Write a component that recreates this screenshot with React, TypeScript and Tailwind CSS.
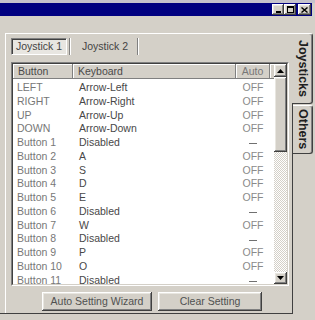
type Row = { name: string; key: string; auto: string };

const rows: Row[] = [
  { name: "LEFT", key: "Arrow-Left", auto: "OFF" },
  { name: "RIGHT", key: "Arrow-Right", auto: "OFF" },
  { name: "UP", key: "Arrow-Up", auto: "OFF" },
  { name: "DOWN", key: "Arrow-Down", auto: "OFF" },
  { name: "Button 1", key: "Disabled", auto: "-" },
  { name: "Button 2", key: "A", auto: "OFF" },
  { name: "Button 3", key: "S", auto: "OFF" },
  { name: "Button 4", key: "D", auto: "OFF" },
  { name: "Button 5", key: "E", auto: "OFF" },
  { name: "Button 6", key: "Disabled", auto: "-" },
  { name: "Button 7", key: "W", auto: "OFF" },
  { name: "Button 8", key: "Disabled", auto: "-" },
  { name: "Button 9", key: "P", auto: "OFF" },
  { name: "Button 10", key: "O", auto: "OFF" },
  { name: "Button 11", key: "Disabled", auto: "-" },
];

// classic 3d raised edge
const raised =
  "bg-[#d4d0c8] shadow-[inset_-1px_-1px_#404040,inset_1px_1px_#ffffff,inset_-2px_-2px_#808080,inset_2px_2px_#e8e6e0]";

function Arrow({ down }: { down?: boolean }) {
  return (
    <svg width="7" height="4" viewBox="0 0 7 4">
      <polygon points={down ? "0,0 7,0 3.5,4" : "0,4 7,4 3.5,0"} fill="#000" />
    </svg>
  );
}

function TitleButtons() {
  return (
    <div className="flex items-center">
      <div className={`${raised} flex h-[11px] w-[12px] items-end justify-center pb-[2px]`}>
        <div className="h-[2px] w-[5px] bg-black" />
      </div>
      <div className={`${raised} flex h-[11px] w-[12px] items-center justify-center`}>
        <div className="h-[7px] w-[7px] border border-t-2 border-black" />
      </div>
      <div className={`${raised} ml-[2px] flex h-[11px] w-[13px] items-center justify-center`}>
        <svg width="7" height="6" viewBox="0 0 7 6">
          <path d="M0.5 0.5 L6.5 5.5 M6.5 0.5 L0.5 5.5" stroke="#000" strokeWidth="1.4" />
        </svg>
      </div>
    </div>
  );
}

function ListBox() {
  return (
    <div className="ml-[5px] h-[224px] w-[278px] border border-b-white border-l-[#808080] border-r-white border-t-[#808080]">
      <div className="flex h-full border border-b-[#d4d0c8] border-l-[#404040] border-r-[#d4d0c8] border-t-[#404040] bg-white">
        {/* table */}
        <div className="flex w-[261px] flex-col overflow-hidden">
          <div className="flex h-[15px] shrink-0 bg-[#d4d0c8] text-[#4a4a4a]">
            <div className="w-[60px] border-b border-r border-b-[#808080] border-r-[#808080] pl-[5px] leading-[14px] shadow-[inset_1px_1px_#ffffff]">
              Button
            </div>
            <div className="w-[163px] border-b border-r border-b-[#808080] border-r-[#808080] pl-[5px] leading-[14px] shadow-[inset_1px_1px_#ffffff]">
              Keyboard
            </div>
            <div className="w-[34px] border-b border-r border-b-[#808080] border-r-[#808080] text-center leading-[14px] text-[#777] shadow-[inset_1px_1px_#ffffff]">
              Auto
            </div>
            <div className="flex-1 border-b border-b-[#808080] shadow-[inset_1px_1px_#ffffff]" />
          </div>
          <div className="pt-[2px]">
            {rows.map((r) => (
              <div key={r.name} className="flex h-[13.75px] items-center leading-[13.75px]">
                <div className="w-[60px] pl-[4px] text-[#777]">{r.name}</div>
                <div className="w-[163px] pl-[6px] text-[#484848]">{r.key}</div>
                <div className="flex w-[34px] justify-center text-[#8a8a8a]">
                  {r.auto === "-" ? <div className="mt-[2px] h-[1px] w-[8px] bg-[#707070]" /> : r.auto}
                </div>
              </div>
            ))}
          </div>
        </div>

        {/* scrollbar */}
        <div className="flex w-[13px] flex-col bg-[repeating-conic-gradient(#ffffff_0_25%,#d4d0c8_0_50%)] bg-[length:2px_2px]">
          <div className={`${raised} flex h-[13px] items-center justify-center`}>
            <Arrow />
          </div>
          <div className={`${raised} h-[75px]`} />
          <div className="flex-1" />
          <div className={`${raised} flex h-[12px] items-center justify-center`}>
            <Arrow down />
          </div>
        </div>
      </div>
    </div>
  );
}

export default function App() {
  return (
    <div className="flex h-[320px] w-[315px] flex-col overflow-hidden bg-[#d4d0c8] font-['Liberation_Sans',Arial,sans-serif] text-[10.5px]">
      <div className="h-[3px] bg-[#c4c2cc]" />
      <div className="mr-[3px] flex h-[13px] items-center justify-end bg-[#000080] pr-[1px]">
        <TitleButtons />
      </div>
      <div className="h-[17px]" />

      <div className="flex h-[281px]">
        {/* tab page */}
        <div className="flex w-[292px] border-b border-[#404040] pl-[5px]">
          <div className="flex w-[287px] flex-col border-l border-t border-white pt-[4px]">
            <div className="flex h-[17px] items-stretch pl-[5px] text-[#444]">
              <div className="flex w-[56px] items-center justify-center border border-b-white border-l-[#808080] border-r-white border-t-[#808080] bg-[#e8e6e1] shadow-[inset_1px_1px_#404040]">
                Joystick 1
              </div>
              <div className="ml-[2px] w-[1px] bg-[#808080]" />
              <div className="w-[1px] bg-white" />
              <div className="flex w-[66px] items-center justify-center pl-[2px]">Joystick 2</div>
              <div className="w-[1px] bg-[#808080]" />
              <div className="w-[1px] bg-white" />
            </div>
            <div className="h-[7px]" />
            <ListBox />
            <div className="flex gap-[6px] pl-[36px] pt-[6px] text-[#505050]">
              <div className={`${raised} flex h-[19px] w-[110px] items-center justify-center`}>
                Auto Setting Wizard
              </div>
              <div className={`${raised} flex h-[19px] w-[104px] items-center justify-center`}>
                Clear Setting
              </div>
            </div>
          </div>
        </div>

        {/* side tabs */}
        <div className="flex w-[21px] flex-col text-[12.5px] font-bold text-[#202020]">
          <div className="flex h-[71px] items-center justify-center rounded-r-[3px] border-b border-r border-t border-b-[#404040] border-r-[#404040] border-t-white pl-[1px] shadow-[inset_-1px_0_#808080]">
            <span className="[writing-mode:vertical-rl]">Joysticks</span>
          </div>
          <div className="flex-1 border-l border-[#404040] pt-[1px]">
            <div className="flex h-[49px] items-center justify-center rounded-r-[3px] border-b border-r border-t border-b-[#404040] border-r-[#404040] border-t-white shadow-[inset_-1px_0_#808080]">
              <span className="[writing-mode:vertical-rl]">Others</span>
            </div>
          </div>
        </div>
      </div>
      <div className="flex-1" />
    </div>
  );
}
